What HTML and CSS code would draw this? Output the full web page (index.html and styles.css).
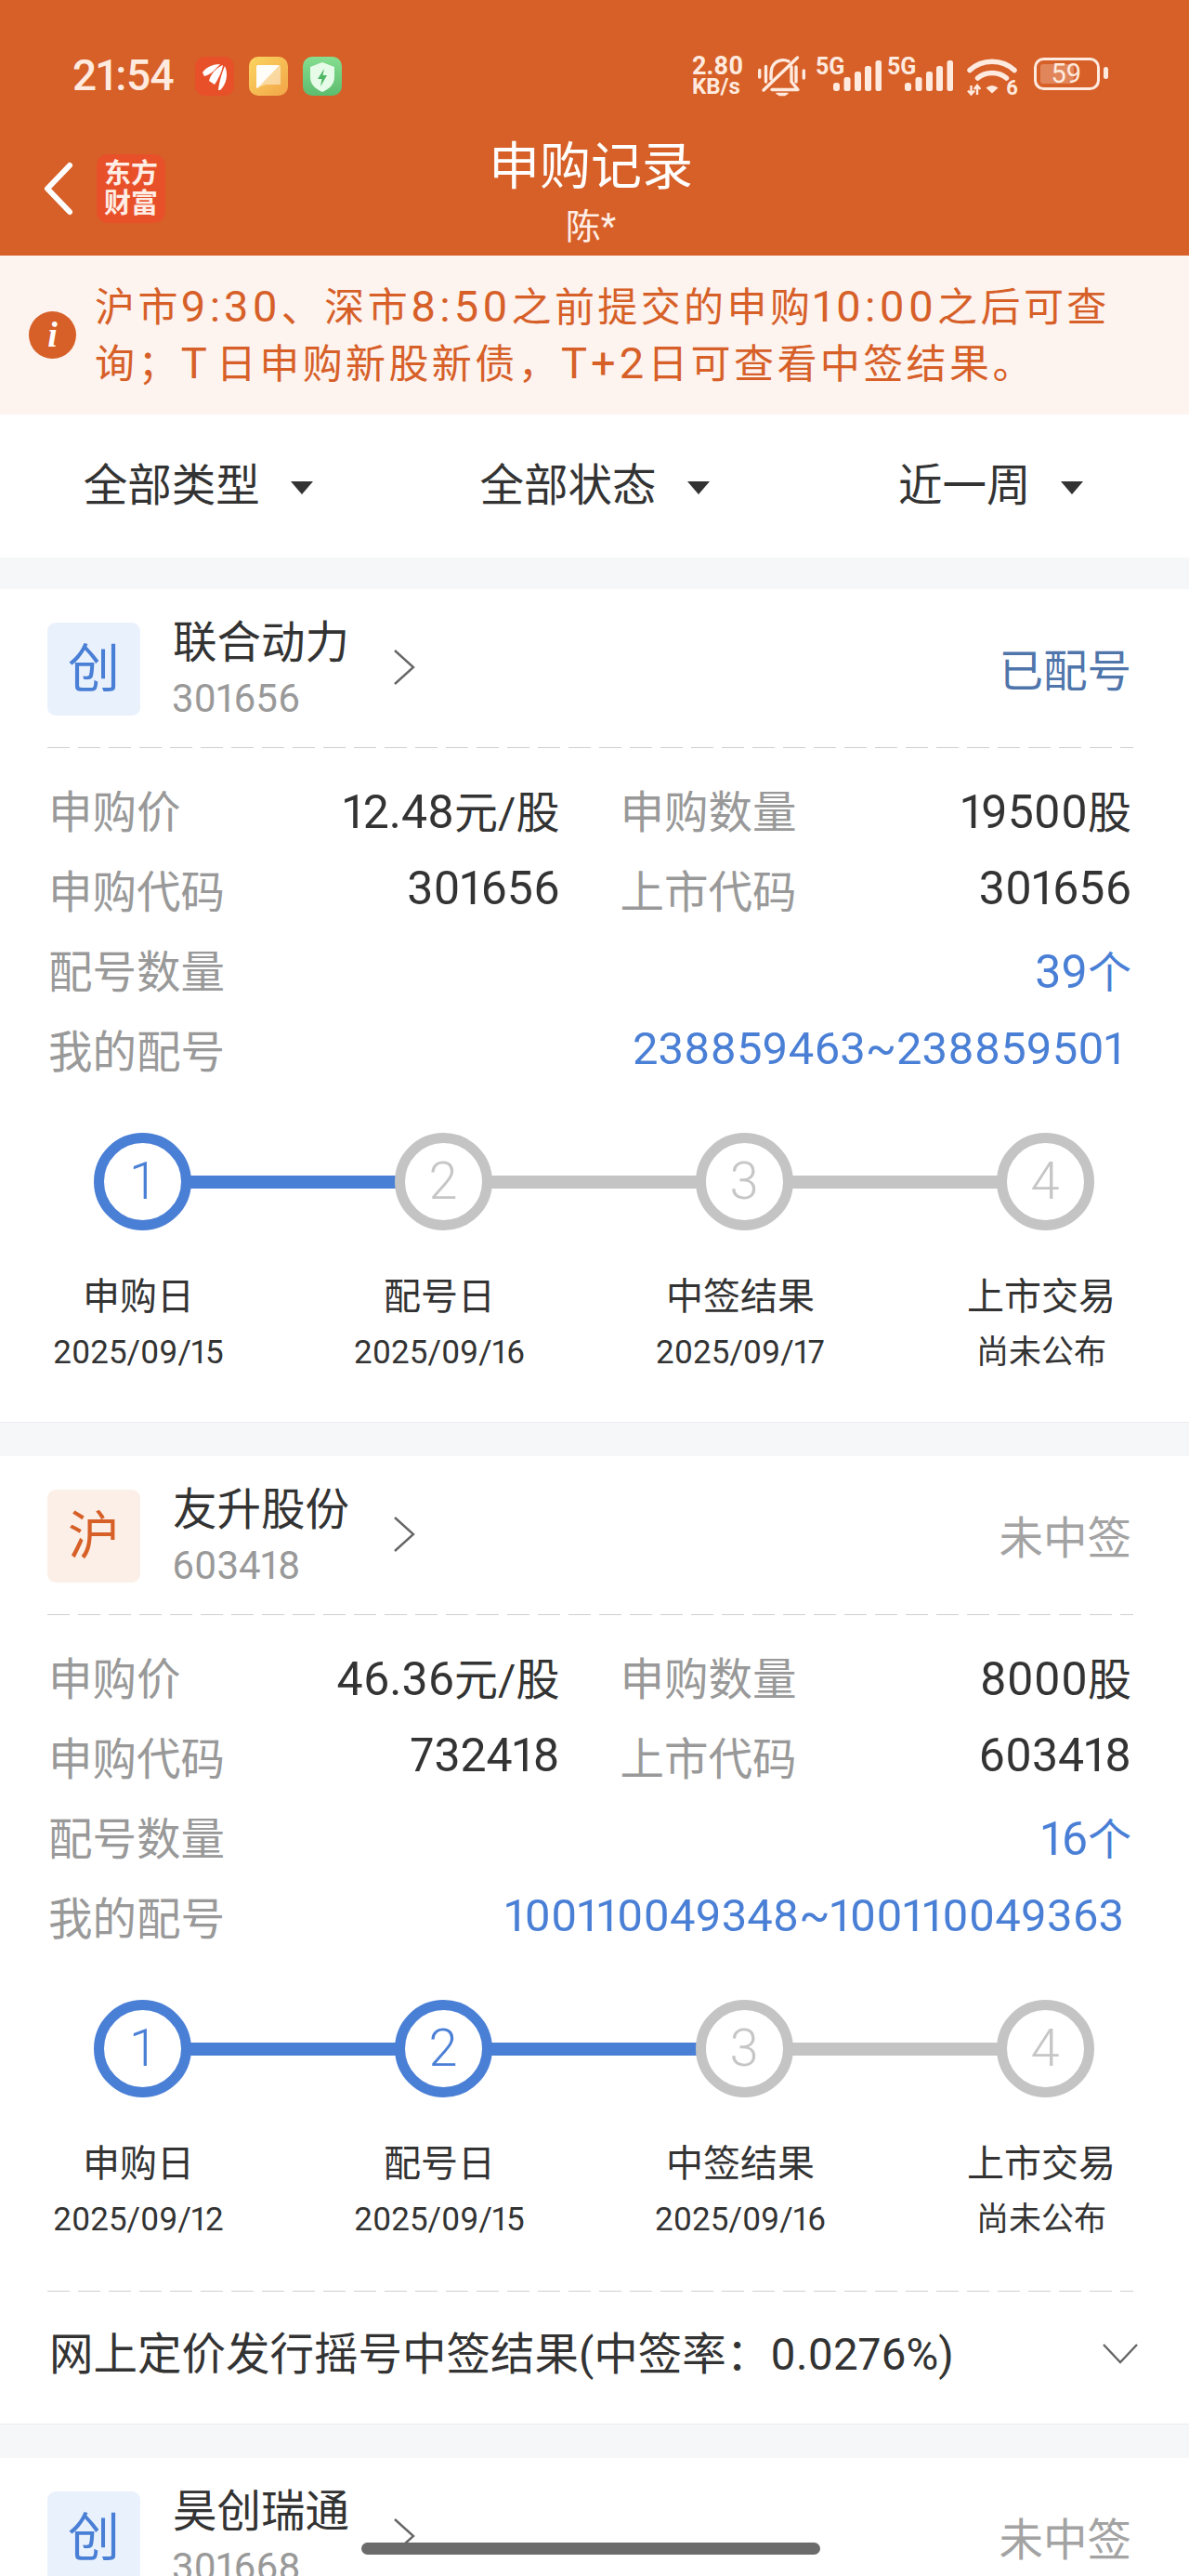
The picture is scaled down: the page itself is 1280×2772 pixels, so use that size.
FILE: index.html
```html
<!DOCTYPE html>
<html lang="zh-CN">
<head>
  <meta charset="UTF-8">
  <meta name="viewport" content="width=device-width, initial-scale=1.0">
  <title>申购记录</title>
  <link rel="stylesheet" href="styles.css">
</head>
<body>
  <div class="page">
    <header class="top">
      <div class="status">
        <div class="status-left">
          <span class="time">21:54</span>
          <div class="app-icons">
            <svg class="app-icon" viewBox="0 0 42 42"><rect width="42" height="42" rx="10" fill="#e8502a"/><path d="M8 17C12 11 20 8 27 8C23 12 17 20 10 21Z M15 26C17 18 24 11 30 9C29 16 25 24 21 30Z M25 36C26 27 29 17 32 10C36 18 34 30 27 36Z" fill="#fff"/></svg>
            <svg class="app-icon" viewBox="0 0 42 42"><defs><linearGradient id="yel" x1="0" y1="0" x2="1" y2="1"><stop offset="0" stop-color="#fbd560"/><stop offset="1" stop-color="#f2a548"/></linearGradient></defs><rect width="42" height="42" rx="10" fill="url(#yel)"/><path d="M8 10H34V30H18L8 34Z" fill="#fff" opacity=".45"/><path d="M8 11Q8 9 10 9H33L9 34Q8 34 8 32Z" fill="#fff" opacity=".92"/></svg>
            <svg class="app-icon" viewBox="0 0 42 42"><defs><linearGradient id="grn" x1="0" y1="0" x2="0" y2="1"><stop offset="0" stop-color="#86de90"/><stop offset="1" stop-color="#5dbc6e"/></linearGradient></defs><rect width="42" height="42" rx="10" fill="url(#grn)"/><path d="M21 6L34 11V22C34 30 28 35 21 38C14 35 8 30 8 22V11Z" fill="#e6fbe8"/><path d="M23 13L16 24H20.5L19 32L26 20H21.5Z" fill="#4fb864"/></svg>
          </div>
        </div>
        <div class="status-right">
          <div class="speed"><span>2.80</span><span class="speed-unit">KB/s</span></div>
          <svg class="ic-bell" viewBox="0 0 51 43" fill="none" stroke="#ffeadf" stroke-width="3.4" stroke-linecap="round" stroke-linejoin="round">
            <path d="M1.7 15.5V23M8.5 11.5V28M41 12V28M49.3 16V24"/>
            <path d="M42.5 2L6 37"/>
            <path d="M33 6C27 3 18 5 15 13C14 17 14 21 14 25M36 12V28L43 36.5H15"/>
            <path d="M20 40.5H32L29 42.5H23Z" fill="#ffeadf" stroke-width="1.5"/>
          </svg>
          <svg class="ic-signal" viewBox="0 0 71 43">
            <text class="sig-text" x="0" y="20">5G</text>
            <rect x="19" y="29" width="7" height="9" rx="3" class="bar"/>
            <rect x="30.5" y="23" width="7" height="15" rx="2.5" class="bar"/>
            <rect x="42" y="17" width="7" height="21" rx="2.5" class="bar"/>
            <rect x="53" y="11" width="7" height="27" rx="2.5" class="bar"/>
            <rect x="64.5" y="5" width="6.5" height="33" rx="2.5" class="bar"/>
          </svg>
          <svg class="ic-signal ic-signal2" viewBox="0 0 71 43">
            <text class="sig-text" x="0" y="20">5G</text>
            <rect x="19" y="29" width="7" height="9" rx="3" class="bar"/>
            <rect x="30.5" y="23" width="7" height="15" rx="2.5" class="bar"/>
            <rect x="42" y="17" width="7" height="21" rx="2.5" class="bar"/>
            <rect x="53" y="11" width="7" height="27" rx="2.5" class="bar"/>
            <rect x="64.5" y="5" width="6.5" height="33" rx="2.5" class="bar"/>
          </svg>
          <svg class="ic-wifi" viewBox="0 0 54 43" fill="none" stroke="#ffeadf" stroke-linecap="round">
            <path d="M3 15.5C16 3 38 3 51 15.5" stroke-width="5.5"/>
            <path d="M11.5 24C20 16.5 34 16.5 42.5 24" stroke-width="5.5"/>
            <path d="M20.5 34.5Q27 29.5 33.5 34.5L27 40.5Z" fill="#ffeadf" stroke="none"/>
            <path d="M4.5 32V41M1 37.5L4.5 41.5L8 37.5M11 42V33M7.7 36L11 32L14.3 36" stroke-width="2.4" stroke-linecap="butt"/>
            <text class="wifi-num" x="42" y="42">6</text>
          </svg>
          <svg class="ic-batt" viewBox="0 0 80 43">
            <rect x="1.5" y="4.5" width="68" height="32" rx="9" fill="none" stroke="#ffeadf" stroke-width="3"/>
            <rect x="7" y="10" width="36" height="21" rx="3" fill="#ffeadf" opacity=".28"/>
            <text class="batt-num" x="35" y="30">59</text>
            <rect x="75" y="13" width="5" height="13" rx="2.5" fill="#ffeadf"/>
          </svg>
        </div>
      </div>
      <nav class="nav">
        <div class="nav-left">
          <svg class="back" viewBox="0 0 32 56" fill="none" stroke="#fff" stroke-width="6" stroke-linecap="round" stroke-linejoin="round"><path d="M28 3L4 28L28 53"/></svg>
          <div class="logo"><span>东方</span><span>财富</span></div>
        </div>
        <div class="nav-title">
          <h1>申购记录</h1>
          <p>陈*</p>
        </div>
        <div></div>
      </nav>
    </header>

    <div class="notice">
      <svg class="notice-icon" viewBox="0 0 51 51"><circle cx="25.5" cy="25.5" r="25.5" fill="#d66028"/><text class="notice-i" x="25.5" y="38">i</text></svg>
      <p>沪市<span class="num">9:30</span>、深市<span class="num">8:50</span>之前提交的申购<span class="num">10:00</span>之后可查<br>询；<span class="num num-t">T</span>日申购新股新债，<span class="num">T+2</span>日可查看中签结果。</p>
    </div>

    <div class="filters">
      <div class="filter">全部类型<i class="caret"></i></div>
      <div class="filter">全部状态<i class="caret"></i></div>
      <div class="filter">近一周<i class="caret"></i></div>
    </div>

    <div class="gap"></div>

    <section class="card">
      <div class="card-head">
        <div class="badge badge-blue">创</div>
        <div class="stock"><div class="stock-name">联合动力</div><div class="stock-code">301656</div></div>
        <svg class="arrow" viewBox="0 0 22 38" fill="none" stroke="#666" stroke-width="2.4"><path d="M1 1L21 19L1 37"/></svg>
        <div class="state state-blue">已配号</div>
      </div>
      <div class="dash"></div>
      <div class="rows">
        <div class="row">
          <div class="cell"><span class="label">申购价</span><span class="value">12.48<small>元/股</small></span></div>
          <div class="cell"><span class="label">申购数量</span><span class="value">19500<small>股</small></span></div>
        </div>
        <div class="row">
          <div class="cell"><span class="label">申购代码</span><span class="value">301656</span></div>
          <div class="cell"><span class="label">上市代码</span><span class="value">301656</span></div>
        </div>
        <div class="row">
          <div class="cell"><span class="label">配号数量</span><span class="value value-blue">39<small>个</small></span></div>
        </div>
        <div class="row">
          <div class="cell"><span class="label">我的配号</span><span class="value value-blue value-range">238859463~238859501</span></div>
        </div>
      </div>
      <div class="steps">
        <div class="step on on-line"><div class="dot">1</div><div class="step-name">申购日</div><div class="step-date">2025/09/15</div></div>
        <div class="step"><div class="dot">2</div><div class="step-name">配号日</div><div class="step-date">2025/09/16</div></div>
        <div class="step"><div class="dot">3</div><div class="step-name">中签结果</div><div class="step-date">2025/09/17</div></div>
        <div class="step"><div class="dot">4</div><div class="step-name">上市交易</div><div class="step-date">尚未公布</div></div>
      </div>
    </section>

    <div class="gap"></div>

    <section class="card">
      <div class="card-head">
        <div class="badge badge-orange">沪</div>
        <div class="stock"><div class="stock-name">友升股份</div><div class="stock-code">603418</div></div>
        <svg class="arrow" viewBox="0 0 22 38" fill="none" stroke="#666" stroke-width="2.4"><path d="M1 1L21 19L1 37"/></svg>
        <div class="state state-gray">未中签</div>
      </div>
      <div class="dash"></div>
      <div class="rows">
        <div class="row">
          <div class="cell"><span class="label">申购价</span><span class="value">46.36<small>元/股</small></span></div>
          <div class="cell"><span class="label">申购数量</span><span class="value">8000<small>股</small></span></div>
        </div>
        <div class="row">
          <div class="cell"><span class="label">申购代码</span><span class="value">732418</span></div>
          <div class="cell"><span class="label">上市代码</span><span class="value">603418</span></div>
        </div>
        <div class="row">
          <div class="cell"><span class="label">配号数量</span><span class="value value-blue">16<small>个</small></span></div>
        </div>
        <div class="row">
          <div class="cell"><span class="label">我的配号</span><span class="value value-blue value-range">100110049348~100110049363</span></div>
        </div>
      </div>
      <div class="steps">
        <div class="step on on-line"><div class="dot">1</div><div class="step-name">申购日</div><div class="step-date">2025/09/12</div></div>
        <div class="step on on-line"><div class="dot">2</div><div class="step-name">配号日</div><div class="step-date">2025/09/15</div></div>
        <div class="step"><div class="dot">3</div><div class="step-name">中签结果</div><div class="step-date">2025/09/16</div></div>
        <div class="step"><div class="dot">4</div><div class="step-name">上市交易</div><div class="step-date">尚未公布</div></div>
      </div>
      <div class="dash dash-foot"></div>
      <div class="result">
        <span>网上定价发行摇号中签结果(中签率：0.0276%)</span>
        <svg class="result-arrow" viewBox="0 0 38 22" fill="none" stroke="#666" stroke-width="2.4"><path d="M1 1L19 20L37 1"/></svg>
      </div>
    </section>

    <div class="gap"></div>

    <section class="card">
      <div class="card-head">
        <div class="badge badge-blue">创</div>
        <div class="stock"><div class="stock-name">昊创瑞通</div><div class="stock-code">301668</div></div>
        <svg class="arrow" viewBox="0 0 22 38" fill="none" stroke="#666" stroke-width="2.4"><path d="M1 1L21 19L1 37"/></svg>
        <div class="state state-gray">未中签</div>
      </div>
    </section>

    <div class="home-bar"></div>
  </div>
</body>
</html>
```

FILE: styles.css
```css
* {
  margin: 0;
  padding: 0;
  box-sizing: border-box;
}
html, body {
  width: 1280px;
  height: 2772px;
  overflow: hidden;
  background: #fff;
}
body {
  font-family: Roboto, "Noto Sans CJK SC", sans-serif;
  font-variant-numeric: proportional-nums;
  color: #333;
}
svg {
  overflow: visible;
}
.page {
  position: relative;
  width: 1280px;
  height: 2772px;
  overflow: hidden;
}

/* top orange block */
.top {
  height: 275px;
  background: #d66028;
}
.status {
  display: flex;
  justify-content: space-between;
  height: 130px;
  padding: 60px 87px 0 78px;
  color: #ffeadf;
}
.status-left {
  display: flex;
  height: 43px;
  align-items: center;
}
.time {
  font-size: 46px;
  line-height: 43px;
  font-weight: 500;
  letter-spacing: -0.5px;
}
.app-icons {
  display: flex;
  gap: 16px;
  margin-left: 23px;
}
.app-icon {
  width: 42px;
  height: 42px;
}
.status-right {
  display: flex;
  height: 43px;
  align-items: flex-start;
}
.speed {
  display: flex;
  flex-direction: column;
  width: 57px;
  font-size: 27px;
  font-weight: 700;
  line-height: 22px;
  white-space: nowrap;
}
.speed-unit {
  font-size: 24px;
}
.ic-bell {
  width: 51px;
  height: 43px;
  margin-left: 14px;
}
.ic-signal {
  width: 71px;
  height: 43px;
  margin-left: 11px;
}
.ic-signal2 {
  margin-left: 6px;
}
.bar {
  fill: #ffeadf;
}
.sig-text {
  font-size: 25px;
  font-weight: 700;
  fill: #ffeadf;
}
.ic-wifi {
  width: 54px;
  height: 43px;
  margin-left: 15px;
}
.wifi-num {
  font-size: 22px;
  font-weight: 700;
  fill: #ffeadf;
  stroke: none;
}
.ic-batt {
  width: 80px;
  height: 43px;
  margin-left: 18px;
  margin-top: -1px;
}
.batt-num {
  font-size: 29px;
  fill: #ffeadf;
  text-anchor: middle;
}
.nav {
  display: grid;
  grid-template-columns: 1fr auto 1fr;
  height: 145px;
}
.nav-left {
  display: flex;
  align-items: center;
  padding-left: 47px;
}
.back {
  width: 32px;
  height: 56px;
}
.logo {
  display: flex;
  flex-direction: column;
  align-items: center;
  justify-content: center;
  width: 74px;
  height: 74px;
  margin-left: 25px;
  background: #e8502a;
  border-radius: 12px;
  color: #ffeee6;
  font-size: 29px;
  font-weight: 700;
  line-height: 32px;
}
.nav-title {
  padding: 22px 8px 0 0;
  text-align: center;
  color: #fff;
}
.nav-title h1 {
  font-size: 55px;
  font-weight: 400;
  line-height: 54px;
}
.nav-title p {
  margin-top: 19px;
  font-size: 38px;
  line-height: 38px;
  color: #ffeee6;
}

/* notice */
.notice {
  display: flex;
  align-items: center;
  height: 171px;
  padding-left: 31px;
  background: #fdf3ef;
}
.notice-icon {
  width: 51px;
  height: 51px;
  flex: none;
}
.notice-i {
  font-family: "Liberation Serif", serif;
  font-size: 38px;
  font-weight: 700;
  font-style: italic;
  fill: #fff;
  text-anchor: middle;
}
.notice p {
  margin-left: 20px;
  font-size: 43px;
  line-height: 60px;
  letter-spacing: 3.4px;
  color: #d66028;
  white-space: nowrap;
}
.num {
  font-size: 47px;
  letter-spacing: 4px;
}
.num-t {
  margin-right: 6px;
}

/* filters */
.filters {
  display: flex;
  height: 154px;
}
.filter {
  flex: 1;
  display: flex;
  align-items: center;
  justify-content: center;
  padding-bottom: 10px;
  font-size: 47.5px;
}
.caret {
  width: 0;
  height: 0;
  margin-left: 33px;
  margin-top: 14px;
  border-left: 12px solid transparent;
  border-right: 12px solid transparent;
  border-top: 14px solid #333;
}
.gap {
  height: 36px;
  background: #f6f7f9;
}
.filters + .gap {
  height: 34px;
}

/* cards */
.card {
  padding-left: 51px;
  padding-right: 62px;
  border-bottom: 1px solid #e9ebee;
}
.card-head {
  display: flex;
  align-items: center;
  height: 100px;
  margin-top: 36px;
}
.badge {
  width: 100px;
  height: 100px;
  flex: none;
  border-radius: 9px;
  font-size: 56px;
  line-height: 100px;
  text-align: center;
}
.badge-blue {
  background: #e9f1fc;
  color: #4a7fd6;
}
.badge-orange {
  background: #fcefe8;
  color: #d66028;
}
.stock {
  align-self: flex-start;
  width: 238px;
  margin-left: 35px;
}
.stock-name {
  font-size: 47.5px;
  line-height: 44px;
  white-space: nowrap;
}
.stock-code {
  margin-top: 16px;
  margin-left: -1px;
  font-size: 42px;
  line-height: 44px;
  color: #999;
}
.arrow {
  width: 22px;
  height: 38px;
  margin-top: -4px;
}
.state {
  margin-left: auto;
  margin-top: -4px;
  font-size: 47.5px;
}
.state-blue {
  color: #4f75ab;
}
.state-gray {
  color: #a3a3a3;
}
.dash {
  height: 1px;
  margin-top: 34px;
  margin-right: -2px;
  background: repeating-linear-gradient(90deg, #cfcfcf 0, #cfcfcf 24px, transparent 24px, transparent 33px);
}
.rows {
  margin-top: 22px;
}
.row {
  display: flex;
  gap: 64px;
  height: 86px;
}
.cell {
  flex: 1;
  display: flex;
  justify-content: space-between;
  align-items: center;
  padding-left: 1px;
}
.label {
  font-size: 47.5px;
  color: #999;
}
.value {
  font-size: 50px;
  color: #333;
  white-space: nowrap;
}
.value small {
  font-size: 47px;
}
.value-blue {
  color: #4a7fd6;
}
.value-range {
  padding-right: 8px;
  font-size: 49px;
}

/* progress steps */
.steps {
  display: flex;
  width: 1296px;
  margin: 48px 0 0 -60px;
  padding-bottom: 54px;
}
.step {
  position: relative;
  flex: 0 0 324px;
  display: flex;
  flex-direction: column;
  align-items: center;
  color: #c6c6c6;
}
.step::after {
  content: "";
  position: absolute;
  left: 162px;
  top: 46px;
  width: 324px;
  height: 14px;
  background: #c4c4c4;
}
.step:last-child::after {
  display: none;
}
.step.on-line::after {
  background: #4a7fd6;
}
.dot {
  position: relative;
  z-index: 1;
  width: 105px;
  height: 105px;
  border: 11px solid #c4c4c4;
  border-radius: 50%;
  background: #fff;
  font-size: 56px;
  font-weight: 300;
  line-height: 83px;
  text-align: center;
}
.step.on {
  color: #4a7fd6;
}
.step.on .dot {
  border-color: #4a7fd6;
}
.step-name {
  margin-top: 49px;
  padding-right: 8px;
  font-size: 40px;
  line-height: 46px;
  color: #333;
}
.step-date {
  margin-top: 17px;
  padding-right: 8px;
  font-size: 35px;
  line-height: 40px;
  color: #333;
  white-space: nowrap;
}
.dash-foot {
  margin-top: 2px;
}
.result {
  display: flex;
  align-items: center;
  justify-content: space-between;
  height: 142px;
  padding: 0 0 16px 2px;
  font-size: 47.5px;
  margin-right: -7px;
}
.result-arrow {
  width: 38px;
  height: 22px;
  margin-top: 7px;
}
.home-bar {
  position: absolute;
  left: 389px;
  top: 2736px;
  width: 494px;
  height: 13px;
  border-radius: 7px;
  background: #6b6b6b;
}
```
